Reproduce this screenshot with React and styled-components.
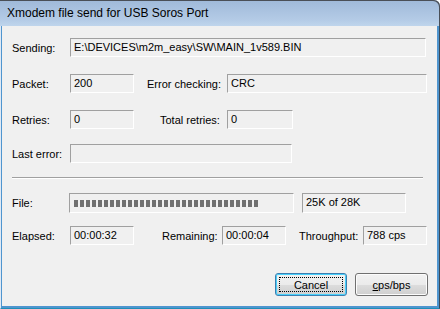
import React from "react";
import styled, { createGlobalStyle } from "styled-components";

const Global = createGlobalStyle`
  html, body { margin: 0; padding: 0; background: #fff; }
  body { font-family: "Liberation Sans", Arial, sans-serif; }
`;

const Window = styled.div`
  width: 440px;
  height: 309px;
  display: flex;
  flex-direction: column;
  background: linear-gradient(to bottom, #9fb9d9 0px, #b4cbe6 20px, #bfd5ec 26px);
  border-top-right-radius: 6px;
  box-shadow: inset -1px 1px 0 #4a4f57;
  overflow: hidden;
`;

const TitleBar = styled.div`
  height: 26px;
  flex: none;
  display: flex;
  align-items: center;
  padding-left: 7px;
  font-family: "Liberation Sans", Arial, sans-serif;
  font-size: 12px;
  color: #000;
`;

const Frame = styled.div`
  flex: 1;
  display: flex;
  border-left: 1px solid #dfe9f5;
  border-right: 1px solid #3a4a5a;
  border-bottom: 1px solid #1f8fb8;
  background: #4f95cf;
  padding: 0 2px 2px 1px;
`;

const Client = styled.div`
  flex: 1;
  background: #f0f0f0;
  display: flex;
  flex-direction: column;
  padding-left: 10px;
  font-family: "Liberation Sans", Arial, sans-serif;
  font-size: 11px;
  color: #000;
`;

const Row = styled.div`
  display: flex;
  align-items: center;
  margin-top: ${(p) => p.$mt}px;
`;

const Label = styled.div`
  width: ${(p) => p.$w}px;
  margin-left: ${(p) => p.$ml || 0}px;
  box-sizing: border-box;
  white-space: nowrap;
  flex: none;
`;

const Field = styled.div`
  width: ${(p) => p.$w}px;
  height: ${(p) => p.$h || 19}px;
  margin-left: ${(p) => p.$ml || 0}px;
  box-sizing: border-box;
  border: 1px solid;
  border-color: #a0a0a0 #ffffff #ffffff #a0a0a0;
  background: #f0f0f0;
  padding: 2px 0 0 3px;
  white-space: nowrap;
  overflow: hidden;
  flex: none;
`;

const Separator = styled.div`
  width: 411px;
  height: 2px;
  margin-top: ${(p) => p.$mt}px;
  border-top: 1px solid #a0a0a0;
  border-bottom: 1px solid #ffffff;
  box-sizing: border-box;
`;

const Progress = styled.div`
  width: ${(p) => p.$w}px;
  height: 20px;
  box-sizing: border-box;
  border: 1px solid;
  border-color: #a0a0a0 #ffffff #ffffff #a0a0a0;
  background: #f0f0f0;
  padding: 6px 0 0 4px;
  display: flex;
  gap: 2px;
  flex: none;
`;

const Chunk = styled.div`
  width: 4px;
  height: 7px;
  background: #707070;
  flex: none;
`;

const ButtonRow = styled.div`
  display: flex;
  gap: 8px;
  margin-top: ${(p) => p.$mt}px;
  margin-left: ${(p) => p.$ml}px;
`;

const Button = styled.div`
  width: ${(p) => p.$w}px;
  height: 23px;
  box-sizing: border-box;
  border: 1px solid ${(p) => (p.$default ? "#3c7fb1" : "#707070")};
  border-radius: 3px;
  background: linear-gradient(to bottom, #f2f2f2 0%, #ebebeb 50%, #dddddd 51%, #cfcfcf 100%);
  box-shadow: inset 0 0 0 1px ${(p) => (p.$default ? "#48d0fa" : "#fcfcfc")};
  display: flex;
  align-items: center;
  justify-content: center;
  position: relative;
  font-size: 11px;
  color: #000;
  flex: none;
`;

const Focus = styled.div`
  position: absolute;
  inset: 3px;
  border: 1px dotted #000;
  pointer-events: none;
`;

const Mnemonic = styled.span`
  text-decoration: underline;
`;

export default function App() {
  const chunks = Array.from({ length: 31 });
  return (
    <>
      <Global />
      <Window>
        <TitleBar>Xmodem file send for USB Soros Port</TitleBar>
        <Frame>
          <Client>
            <Row $mt={12}>
              <Label $w={58}>Sending:</Label>
              <Field $w={356}>E:\DEVICES\m2m_easy\SW\MAIN_1v589.BIN</Field>
            </Row>
            <Row $mt={17}>
              <Label $w={58}>Packet:</Label>
              <Field $w={64}>200</Field>
              <Label $w={80} $ml={13}>Error checking:</Label>
              <Field $w={200}>CRC</Field>
            </Row>
            <Row $mt={17}>
              <Label $w={58}>Retries:</Label>
              <Field $w={64}>0</Field>
              <Label $w={67} $ml={26}>Total retries:</Label>
              <Field $w={66}>0</Field>
            </Row>
            <Row $mt={15}>
              <Label $w={58}>Last error:</Label>
              <Field $w={222}></Field>
            </Row>
            <Separator $mt={14} />
            <Row $mt={14}>
              <Label $w={57}>File:</Label>
              <Progress $w={225}>
                {chunks.map((_, i) => (
                  <Chunk key={i} />
                ))}
              </Progress>
              <Field $w={104} $h={20} $ml={8}>25K of 28K</Field>
            </Row>
            <Row $mt={13}>
              <Label $w={58}>Elapsed:</Label>
              <Field $w={64}>00:00:32</Field>
              <Label $w={60} $ml={28}>Remaining:</Label>
              <Field $w={64}>00:00:04</Field>
              <Label $w={64} $ml={13}>Throughput:</Label>
              <Field $w={64}>788 cps</Field>
            </Row>
            <ButtonRow $mt={28} $ml={263}>
              <Button $w={72} $default>
                Cancel
                <Focus />
              </Button>
              <Button $w={73}>
                <span>
                  <Mnemonic>c</Mnemonic>ps/bps
                </span>
              </Button>
            </ButtonRow>
          </Client>
        </Frame>
      </Window>
    </>
  );
}
